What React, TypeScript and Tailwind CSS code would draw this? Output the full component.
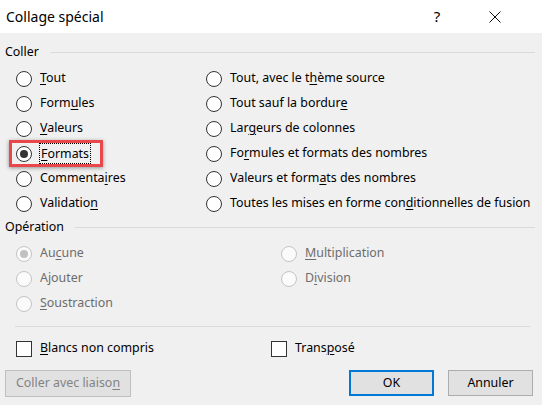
import { ReactNode } from 'react'

const font = { fontFamily: '"Noto Sans", "Open Sans", sans-serif' }

interface RadioProps {
  label: ReactNode
  checked?: boolean
  disabled?: boolean
}

function Radio({ label, checked, disabled }: RadioProps) {
  return (
    <div className="flex h-[25px] items-center gap-[8px]">
      <span
        className={
          'flex h-[16px] w-[16px] shrink-0 items-center justify-center rounded-full border ' +
          (disabled ? 'border-[#c4c4c4] bg-[#fbfbfb]' : 'border-[#333333] bg-white')
        }
      >
        {checked && (
          <span
            className={
              'h-[8px] w-[8px] rounded-full ' + (disabled ? 'bg-[#c2c2c2]' : 'bg-[#333333]')
            }
          />
        )}
      </span>
      <span className={disabled ? 'text-[#6d6d6d]' : 'text-black'}>{label}</span>
    </div>
  )
}

function Checkbox({ label }: { label: ReactNode }) {
  return (
    <div className="flex h-[25px] items-center gap-[8px]">
      <span className="h-[16px] w-[16px] shrink-0 border border-[#333333] bg-white" />
      <span>{label}</span>
    </div>
  )
}

function GroupHeader({ title }: { title: string }) {
  return (
    <div className="flex h-[20px] items-center gap-[11px] pl-[5px] pr-[7px]">
      <span>{title}</span>
      <span className="h-px flex-1 bg-[#dadada]" />
    </div>
  )
}

// single underlined access key
const K = ({ children }: { children: ReactNode }) => (
  <span className="underline decoration-1 underline-offset-[2px]">{children}</span>
)

export default function App() {
  return (
    <div className="flex h-[405px] w-[542px] flex-col bg-[#f0f0f0] text-[12.4px] text-black" style={font}>
      {/* title bar */}
      <div className="flex h-[33px] items-center bg-white pl-[6px]">
        <span className="flex-1 text-[14px]">Collage spécial</span>
        <span className="w-[14px] text-center text-[15px]">?</span>
        <span className="ml-[44px] mr-[40px] flex w-[14px] items-center justify-center">
          <svg width="12" height="12" viewBox="0 0 12 12">
            <path d="M0.5 0.5 L11.5 11.5 M11.5 0.5 L0.5 11.5" stroke="#111" strokeWidth="1" />
          </svg>
        </span>
      </div>

      <div className="mt-[9px]">
        <GroupHeader title="Coller" />
      </div>

      <div className="mt-[4px] grid grid-cols-[190px_1fr] pl-[16px]">
        <div className="flex flex-col">
          <Radio label={<><K>T</K>out</>} />
          <Radio label={<>Form<K>u</K>les</>} />
          <Radio label={<><K>V</K>aleurs</>} />
          <div className="relative">
            <div className="flex h-[25px] items-center gap-[7px]">
              <span className="flex h-[16px] w-[16px] shrink-0 items-center justify-center rounded-full border border-[#333333] bg-white">
                <span className="h-[8px] w-[8px] rounded-full bg-[#333333]" />
              </span>
              <span className="border border-dotted border-black px-[1px] leading-[19px]">
                <K>F</K>ormats
              </span>
            </div>
            <div className="absolute left-[-7px] top-[-1px] h-[27px] w-[94px] border-[3px] border-[#e8474b] shadow-[0_1px_4px_rgba(0,0,0,0.4)]" />
          </div>
          <Radio label={<>Commenta<K>i</K>res</>} />
          <Radio label={<>Validatio<K>n</K></>} />
        </div>
        <div className="flex flex-col">
          <Radio label={<>Tout, avec le t<K>h</K>ème source</>} />
          <Radio label={<>Tout sauf la bordur<K>e</K></>} />
          <Radio label={<>Lar<K>g</K>eurs de colonnes</>} />
          <Radio label={<>Fo<K>r</K>mules et formats des nombres</>} />
          <Radio label={<>Valeurs et form<K>a</K>ts des nombres</>} />
          <Radio label={<>Toutes les mises en forme con<K>d</K>itionnelles de fusion</>} />
        </div>
      </div>

      <div className="mt-px">
        <GroupHeader title="Opération" />
      </div>

      <div className="mt-[4px] grid grid-cols-[265px_1fr] pl-[16px]">
        <div className="flex flex-col">
          <Radio disabled checked label={<>Au<K>c</K>une</>} />
          <Radio disabled label="Ajouter" />
          <Radio disabled label={<><K>S</K>oustraction</>} />
        </div>
        <div className="flex flex-col">
          <Radio disabled label={<><K>M</K>ultiplication</>} />
          <Radio disabled label={<>D<K>i</K>vision</>} />
        </div>
      </div>

      <div className="ml-[15px] mr-[12px] mt-[10px] h-px bg-[#dadada]" />

      <div className="mt-[9px] grid grid-cols-[255px_1fr] pl-[16px]">
        <Checkbox label={<><K>B</K>lancs non compris</>} />
        <Checkbox label={<>Trans<K>p</K>osé</>} />
      </div>

      <div className="mt-[9px] flex items-start pl-[5px] pr-[9px]">
        <button className="h-[27px] w-[126px] border border-[#bfbfbf] bg-[#e1e1e1] text-[#838383]">
          Coller avec liaiso<K>n</K>
        </button>
        <span className="flex-1" />
        <button className="h-[26px] w-[85px] border-2 border-[#0078d7] bg-[#e1e1e1] text-black">
          OK
        </button>
        <button className="ml-[14px] h-[26px] w-[85px] border border-[#adadad] bg-[#e1e1e1] text-black">
          Annuler
        </button>
      </div>
    </div>
  )
}
